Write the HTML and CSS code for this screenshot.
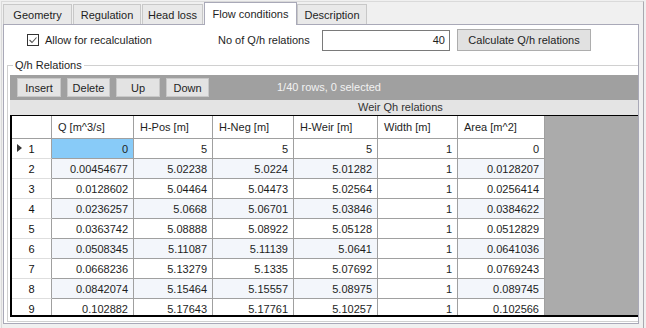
FILE: index.html
```html
<!DOCTYPE html>
<html lang="en">
<head>
  <meta charset="UTF-8">
  <title>Flow conditions</title>
  <link rel="stylesheet" href="styles.css">
</head>
<body>

  <div class="frame">
    <div class="tabs">
      <div class="tab tab-geometry">Geometry</div>
      <div class="tab tab-regulation">Regulation</div>
      <div class="tab tab-headloss">Head loss</div>
      <div class="tab tab-flow active">Flow conditions</div>
      <div class="tab tab-description">Description</div>
    </div>

    <div class="panel">
      <div class="top-row">
        <label class="check-field">
          <span class="check-box">
            <svg width="12" height="12" viewBox="0 0 12 12">
              <rect x="0.5" y="0.5" width="11" height="11" fill="#fff" stroke="#333"/>
              <polyline points="2.5,6 5,8.5 9.5,3.5" fill="none" stroke="#555" stroke-width="1.1"/>
            </svg>
          </span>
          Allow for recalculation
        </label>
        <span class="field-label">No of Q/h relations</span>
        <div class="num-input">40</div>
        <button class="btn-calc">Calculate Q/h relations</button>
      </div>

      <fieldset class="group">
        <legend>Q/h Relations</legend>
        <div class="toolbar">
          <button class="tb-btn w44">Insert</button>
          <button class="tb-btn w43">Delete</button>
          <button class="tb-btn w44">Up</button>
          <button class="tb-btn w43">Down</button>
          <span class="status">1/40 rows, 0 selected</span>
        </div>
        <div class="band">Weir Qh relations</div>
        <div class="grid">
          <table class="qh-table">
            <colgroup>
              <col class="c-ind"><col class="c-q"><col class="c-pos"><col class="c-neg">
              <col class="c-weir"><col class="c-width"><col class="c-area">
            </colgroup>
            <thead>
              <tr>
                <th class="ind"></th>
                <th>Q [m^3/s]</th>
                <th>H-Pos [m]</th>
                <th>H-Neg [m]</th>
                <th>H-Weir [m]</th>
                <th>Width [m]</th>
                <th>Area [m^2]</th>
              </tr>
            </thead>
            <tbody>
              <tr>
                <td class="ind"><span class="row-arrow"></span>1</td>
                <td class="selected">0</td><td>5</td><td>5</td><td>5</td><td class="w">1</td><td>0</td>
              </tr>
              <tr class="alt">
                <td class="ind">2</td>
                <td>0.00454677</td><td>5.02238</td><td>5.0224</td><td>5.01282</td><td class="w">1</td><td>0.0128207</td>
              </tr>
              <tr>
                <td class="ind">3</td>
                <td>0.0128602</td><td>5.04464</td><td>5.04473</td><td>5.02564</td><td class="w">1</td><td>0.0256414</td>
              </tr>
              <tr class="alt">
                <td class="ind">4</td>
                <td>0.0236257</td><td>5.0668</td><td>5.06701</td><td>5.03846</td><td class="w">1</td><td>0.0384622</td>
              </tr>
              <tr>
                <td class="ind">5</td>
                <td>0.0363742</td><td>5.08888</td><td>5.08922</td><td>5.05128</td><td class="w">1</td><td>0.0512829</td>
              </tr>
              <tr class="alt">
                <td class="ind">6</td>
                <td>0.0508345</td><td>5.11087</td><td>5.11139</td><td>5.0641</td><td class="w">1</td><td>0.0641036</td>
              </tr>
              <tr>
                <td class="ind">7</td>
                <td>0.0668236</td><td>5.13279</td><td>5.1335</td><td>5.07692</td><td class="w">1</td><td>0.0769243</td>
              </tr>
              <tr class="alt">
                <td class="ind">8</td>
                <td>0.0842074</td><td>5.15464</td><td>5.15557</td><td>5.08975</td><td class="w">1</td><td>0.089745</td>
              </tr>
              <tr>
                <td class="ind">9</td>
                <td>0.102882</td><td>5.17643</td><td>5.17761</td><td>5.10257</td><td class="w">1</td><td>0.102566</td>
              </tr>
            </tbody>
          </table>
        </div>
      </fieldset>
    </div>
  </div>

</body>
</html>
```

FILE: styles.css
```css
* {
  margin: 0; padding: 0; box-sizing: border-box;
}

body {
  font-family: 'Liberation Sans', Arial, sans-serif;
  font-size: 11px;
  color: #1e1e1e;
  background: #f0f0f0;
}

.frame {
  margin: 1px 0 0 1px;
  width: 643px;
  height: 327px;
  border: 1px solid #dadada;
  border-right-color: #a9a9b0;
  border-bottom: none;
}

/* tabs */

.tabs {
  display: flex;
  align-items: flex-end;
  height: 22px;
  padding-left: 1px;
}

.tab {
  height: 20px;
  margin-right: 1px;
  padding-top: 1px;
  border: 1px solid #c8c8c8;
  border-bottom: none;
  background: #e9e9e9;
  display: flex;
  align-items: center;
  justify-content: center;
}

.tab-geometry { width: 69px; }
.tab-regulation { width: 68px; }
.tab-headloss { width: 61px; }
.tab-flow { width: 93px; }
.tab-description { width: 70px; }

.tab.active {
  height: 23px;
  margin-bottom: -1px;
  margin-right: 0;
  padding-top: 0;
  padding-bottom: 1px;
  background: #fff;
  border-color: #a9a9b8;
  position: relative;
  z-index: 1;
}

.panel {
  width: 636px;
  height: 300px;
  margin-left: 1px;
  border: 1px solid #a9a9b8;
  background: #fff;
}

/* top row */

.top-row {
  display: flex;
  align-items: center;
  height: 30px;
  padding-left: 23px;
}

.check-field {
  display: flex;
  align-items: center;
  gap: 6px;
  width: 191px;
}

.check-box {
  display: flex;
  width: 12px;
  height: 12px;
}

.field-label {
  width: 104px;
}

.num-input {
  width: 128px;
  height: 21px;
  border: 1px solid #7a7a7a;
  text-align: right;
  padding-right: 4px;
  line-height: 19px;
}

.btn-calc {
  margin-left: 7px;
  width: 134px;
  height: 22px;
  background: #e1e1e1;
  border: 1px solid #adadad;
  font: inherit;
  color: inherit;
}

/* group box */

.group {
  margin: 4px 0 0 3px;
  border: 1px solid #d0d0d0;
  border-right: none;
  padding: 3px 0 4px 2px;
}

.group legend {
  margin-left: 3px;
  padding: 0 2px;
  line-height: 13px;
}

.toolbar {
  display: flex;
  align-items: flex-start;
  gap: 6px;
  height: 25px;
  padding: 3px 0 0 7px;
  background: #a0a0a0;
}

.tb-btn {
  height: 19px;
  background: #e3e3e3;
  border: 1px solid #c8c8c8;
  font: inherit;
  color: inherit;
}

.tb-btn.w44 { width: 44px; }
.tb-btn.w43 { width: 43px; }

.status {
  margin-left: 62px;
  line-height: 19px;
  color: #f2f2f2;
}

.band {
  height: 15px;
  line-height: 15px;
  padding-left: 348px;
  background: #e4e4e4;
  color: #333;
}

/* grid */

.grid {
  height: 202px;
  overflow: hidden;
  border-top: 1px solid #000;
  border-left: 2px solid #000;
  border-bottom: 2px solid #000;
  background: #ababab;
}

.qh-table {
  table-layout: fixed;
  width: 533px;
  border-spacing: 0;
  background: #fff;
}

.c-ind { width: 40px; }
.c-q { width: 82px; }
.c-pos { width: 79px; }
.c-neg { width: 81px; }
.c-weir { width: 84px; }
.c-width { width: 80px; }
.c-area { width: 87px; }

.qh-table th {
  height: 23px;
  padding-left: 6px;
  font-weight: normal;
  text-align: left;
  border-right: 1px solid #a0a0a0;
  border-bottom: 1px solid #a0a0a0;
}

.qh-table td {
  height: 20px;
  padding: 0 5px 0 0;
  line-height: 18px;
  text-align: right;
  white-space: nowrap;
  border-right: 1px solid #a0a0a0;
  border-bottom: 1px solid #a0a0a0;
}

.qh-table td.ind {
  position: relative;
  padding: 0;
  text-align: center;
  color: #111;
  border-bottom-color: #dedede;
}

.qh-table tr.alt td {
  background: #f3f6fb;
}

.qh-table tr.alt td.ind,
.qh-table tr.alt td.w {
  background: #fff;
}

.qh-table td.selected {
  background: #88cbf8;
}

.row-arrow {
  position: absolute;
  left: 5px;
  top: 5px;
  width: 0;
  height: 0;
  border-top: 4px solid transparent;
  border-bottom: 4px solid transparent;
  border-left: 5px solid #333;
}
```
